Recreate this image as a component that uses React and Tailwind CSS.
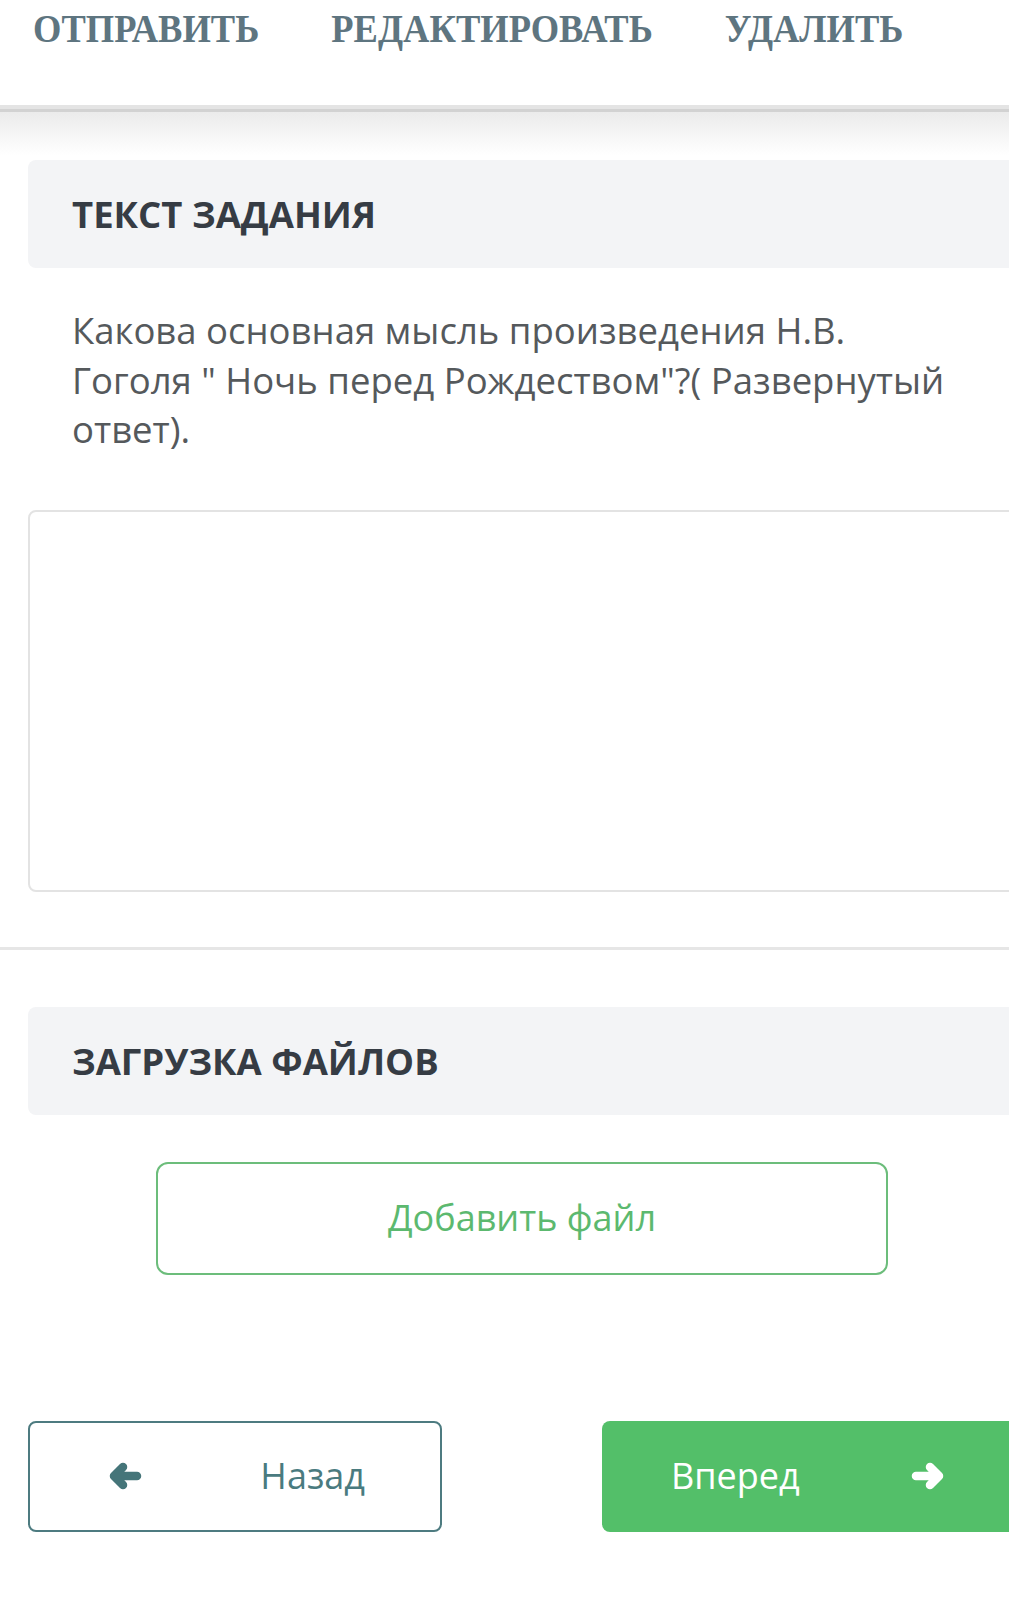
import React from 'react';

const menu = ['ОТПРАВИТЬ', 'РЕДАКТИРОВАТЬ', 'УДАЛИТЬ'];

function Arrow({ dir, className }) {
  // толстая стрелка с круглыми концами
  const d = dir === 'left' ? 'M29 14H6M15 5L6 14L15 23' : 'M5 14H28M19 5L28 14L19 23';
  return (
    <svg width="34" height="28" viewBox="0 0 34 28" fill="none" className={className}>
      <path d={d} stroke="currentColor" strokeWidth="8.5" strokeLinecap="round" strokeLinejoin="round" />
    </svg>
  );
}

function SectionHeader({ title }) {
  return (
    <div className="flex h-[108px] items-center rounded-lg bg-[#f3f4f6] px-[44px]">
      <h2 className="text-[36.5px] font-bold leading-[52px] text-[#363c44]">{title}</h2>
    </div>
  );
}

export default function App() {
  return (
    <div className="min-h-[1604px] w-full overflow-hidden bg-white font-['Open_Sans',sans-serif]">
      <div className="w-[1044px]">
        {/* верхнее меню */}
        <nav className="flex h-[105px] items-start gap-[72px] pl-[33px] pt-[13px]">
          {menu.map((item) => (
            <a
              key={item}
              href="#"
              className="inline-block origin-bottom scale-y-[1.12] font-['Liberation_Serif',serif] text-[36.5px] font-bold leading-none text-[#5e7580]"
            >
              {item}
            </a>
          ))}
        </nav>
        <div className="h-[4px] bg-[#e4e4e4]" />
        <div className="h-[3px] bg-[#d2d2d2]" />
        <div className="h-[43px] bg-gradient-to-b from-[#ebebeb] to-white" />

        <div className="px-[28px] pt-[5px]">
          <SectionHeader title="ТЕКСТ ЗАДАНИЯ" />
          <p className="mt-[38px] px-[44px] text-[36.5px] leading-[49.5px] text-[#55595c]">
            Какова основная мысль произведения Н.В.
            <br />
            Гоголя " Ночь перед Рождеством"?( Развернутый
            <br />
            ответ).
          </p>
          <textarea className="mt-[55px] block h-[382px] w-full resize-none rounded-lg border-2 border-[#e3e3e3] outline-none" />
        </div>

        <div className="mt-[55px] h-[3px] bg-[#e6e6e6]" />

        <div className="px-[28px] pt-[57px]">
          <SectionHeader title="ЗАГРУЗКА ФАЙЛОВ" />
          <div className="mt-[47px] flex justify-center">
            <button className="h-[113px] w-[732px] rounded-xl border-2 border-[#6cbd7b] text-[36px] text-[#5cb96f]">
              Добавить файл
            </button>
          </div>

          <div className="mt-[146px] flex justify-between pb-[70px]">
            <button className="flex h-[111px] w-[414px] items-center justify-between rounded-lg border-2 border-[#4d7b80] pl-[78px] pr-[75px] text-[36px] text-[#4a7b7f]">
              <Arrow dir="left" className="text-[#457579]" />
              <span>Назад</span>
            </button>
            <button className="flex h-[111px] w-[414px] items-center justify-between rounded-lg bg-[#53bf69] pl-[69px] pr-[71px] text-[36px] text-white">
              <span>Вперед</span>
              <Arrow dir="right" />
            </button>
          </div>
        </div>
      </div>
    </div>
  );
}
